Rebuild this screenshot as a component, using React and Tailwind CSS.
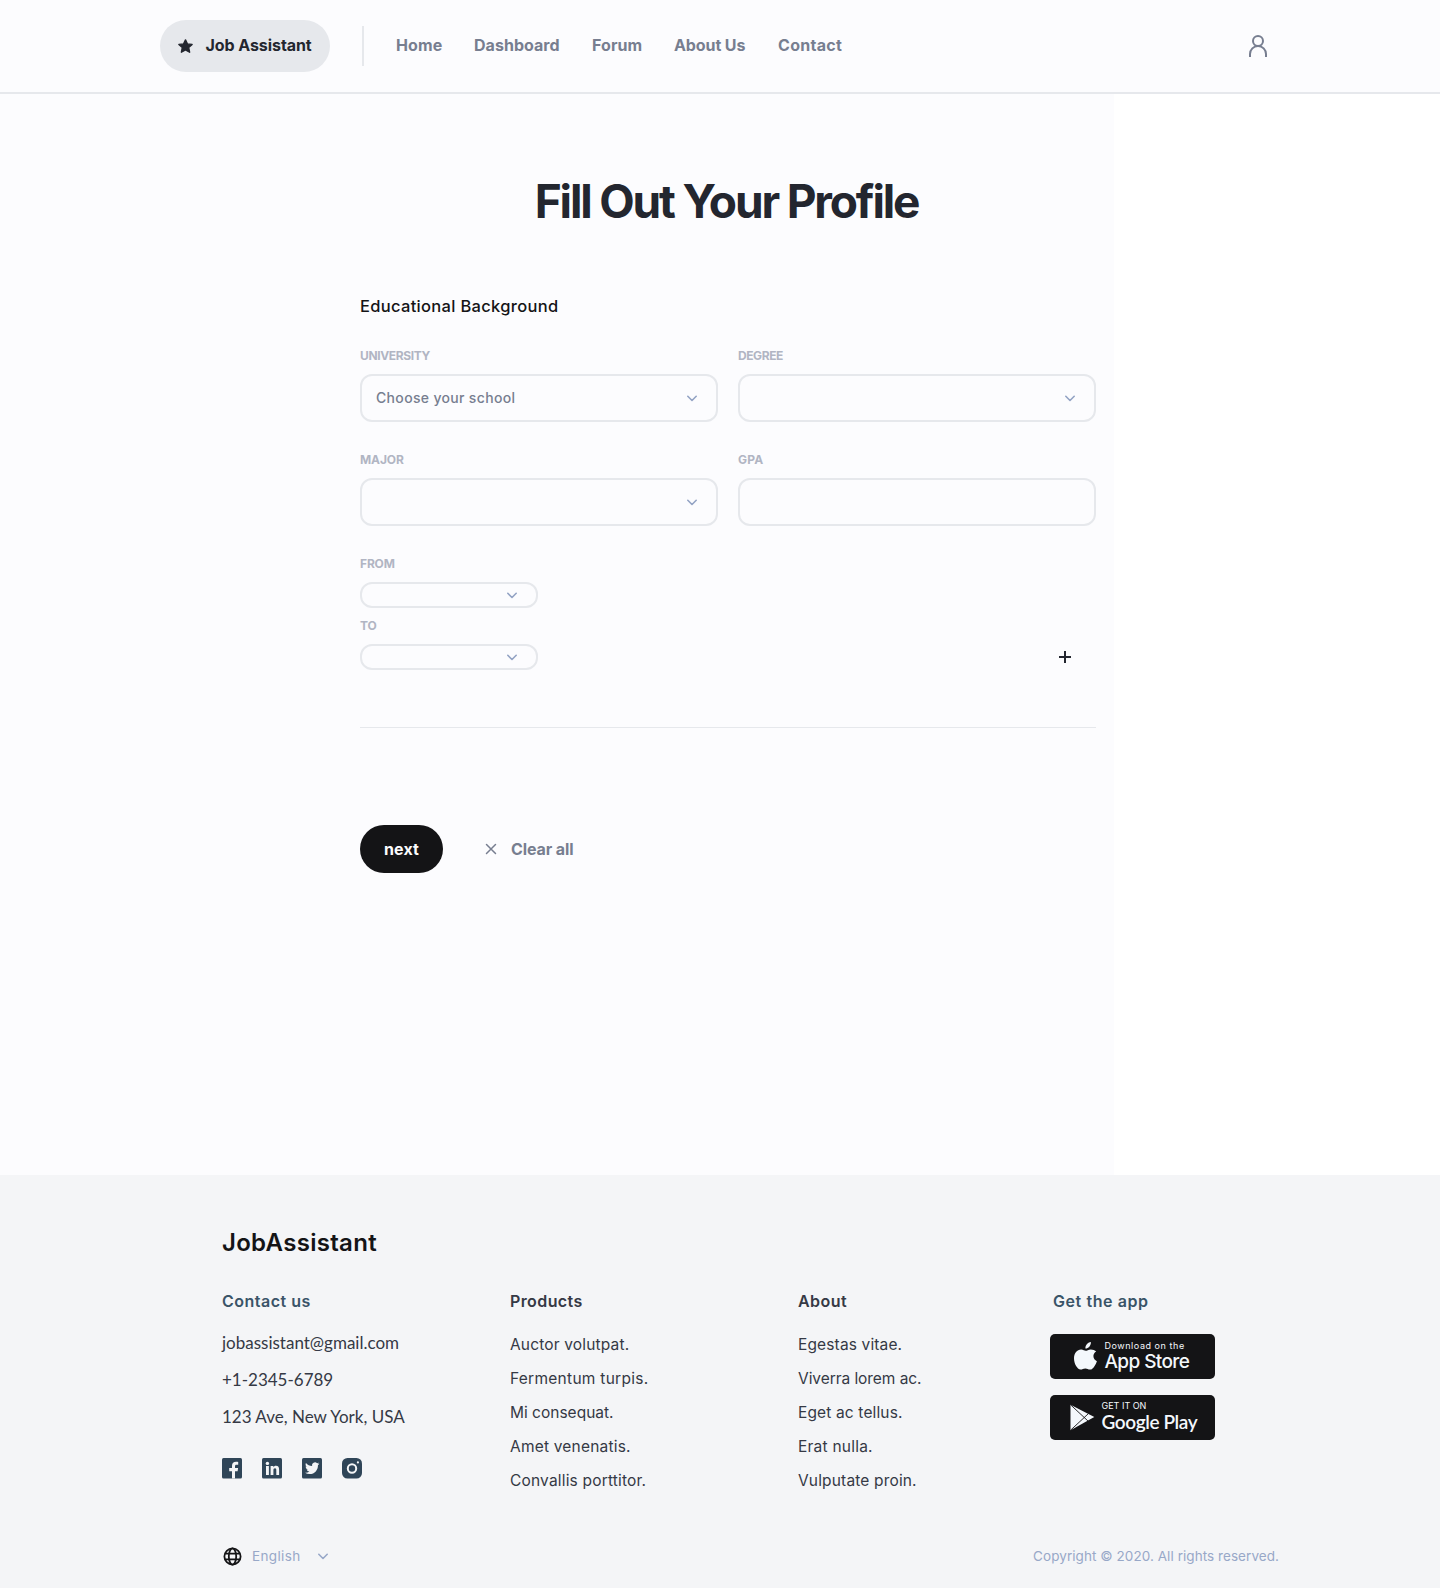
const navLinks = [
  { label: "Home", cls: "w-[78px] tracking-[0.1px]" },
  { label: "Dashboard", cls: "w-[118px] tracking-[0.03px]" },
  { label: "Forum", cls: "w-[82px] tracking-[0.1px]" },
  { label: "About Us", cls: "w-[104px] tracking-[-0.1px]" },
  { label: "Contact", cls: "w-[64px] tracking-[0.3px]" },
];

const products = [
  { label: "Auctor volutpat.", cls: "tracking-[0.16px]" },
  { label: "Fermentum turpis.", cls: "tracking-[0.27px]" },
  { label: "Mi consequat.", cls: "tracking-[0px]" },
  { label: "Amet venenatis.", cls: "tracking-[0.2px]" },
  { label: "Convallis porttitor.", cls: "tracking-[0.18px]" },
];

const about = [
  { label: "Egestas vitae.", cls: "tracking-[0.14px]" },
  { label: "Viverra lorem ac.", cls: "tracking-[-0.06px]" },
  { label: "Eget ac tellus.", cls: "tracking-[0.14px]" },
  { label: "Erat nulla.", cls: "tracking-[0.23px]" },
  { label: "Vulputate proin.", cls: "tracking-[0.16px]" },
];

function Chevron({ className }) {
  return (
    <svg className={className} width="12" height="8" viewBox="0 0 12 8" fill="none" stroke="currentColor" strokeWidth="1.6" strokeLinecap="round" strokeLinejoin="round">
      <path d="M1.8 2.3 6 6.5l4.2-4.2" />
    </svg>
  );
}

function Field({ label, labelCls, boxCls, children, arrow = true }) {
  return (
    <div>
      <div className={`h-3 text-[12px] leading-3 font-bold whitespace-nowrap text-[#b1b5c3] ${labelCls}`}>{label}</div>
      <div className={`mt-3 flex items-center justify-between rounded-xl border-2 border-[#e6e8ec] pl-[14px] ${boxCls}`}>
        <span className="pb-px text-[14px] font-medium tracking-[0.33px] text-[#777e90]">{children}</span>
        {arrow && <Chevron className="text-[#93a3c4]" />}
      </div>
    </div>
  );
}

function LinkColumn({ title, titleCls, links, className }) {
  return (
    <div className={className}>
      <h3 className={`text-[16px] leading-6 font-semibold text-[#353945] ${titleCls}`}>{title}</h3>
      <ul className="mt-[15px] text-[15.5px] leading-[34px] text-[#353945]">
        {links.map((l) => (
          <li key={l.label} className={l.cls}>{l.label}</li>
        ))}
      </ul>
    </div>
  );
}

function Header() {
  return (
    <header className="flex h-[94px] items-start border-b-2 border-[#e6e8ec] bg-[#fcfcfe] pl-[160px]">
      <div className="mt-5 flex h-[52px] w-[170px] items-center rounded-[26px] bg-[#e6e8ec] pl-[18px]">
        <svg width="15" height="14" viewBox="0 0 15 14" fill="#23262f" stroke="#23262f" strokeWidth="1.4" strokeLinejoin="round">
          <path d="M7.5.9 9.4 4.9l4.7.5-3.4 3.2.9 4.6-4.1-2.300-4.100 2.300.9-4.600L.9 5.400l4.700-.5z" />
        </svg>
        <span className="mb-[2px] ml-[12.5px] text-[16px] leading-6 font-bold tracking-[-0.07px] whitespace-nowrap text-[#23262f]">Job Assistant</span>
      </div>
      <div className="mt-[26px] ml-8 h-10 w-[2px] bg-[#e6e8ec]" />
      <nav className="mt-[33px] ml-8 flex text-[16px] leading-6 font-bold whitespace-nowrap text-[#777e90]">
        {navLinks.map((l) => (
          <a key={l.label} className={l.cls}>{l.label}</a>
        ))}
      </nav>
      <svg className="mt-[34px] ml-[406px] text-[#777e90]" width="20" height="24" viewBox="0 0 20 24" fill="none" stroke="currentColor" strokeWidth="2">
        <circle cx="10" cy="7" r="5" />
        <path d="M2 23v-3a8 8 0 0 1 16 0v3" />
      </svg>
    </header>
  );
}

function ProfileForm() {
  return (
    <main className="h-[1081px] w-[1114px] bg-[#fcfcfe] pt-[79px] pl-[360px]">
      <div className="w-[736px]">
        <h1 className="pr-[3px] text-center text-[46px] leading-[56px] font-bold tracking-[-2.16px] text-[#23262f]">Fill Out Your Profile</h1>
        <h2 className="mt-[65px] text-[16.5px] leading-6 font-medium tracking-[0.31px] text-[#141416]">Educational Background</h2>
        <div className="mt-8 grid grid-cols-[358px_358px] gap-x-5 gap-y-8">
          <Field label="UNIVERSITY" labelCls="tracking-[-0.35px]" boxCls="h-12 pr-[18px]">Choose your school</Field>
          <Field label="DEGREE" labelCls="tracking-[-0.42px]" boxCls="h-12 pr-[18px]" />
          <Field label="MAJOR" labelCls="tracking-[-0.1px]" boxCls="h-12 pr-[18px]" />
          <Field label="GPA" labelCls="tracking-[0.2px]" boxCls="h-12" arrow={false} />
        </div>
        <div className="mt-8 flex items-end justify-between">
          <div className="flex w-[178px] flex-col gap-3">
            <Field label="FROM" labelCls="tracking-[-0.15px]" boxCls="h-[26px] pr-[18px]" />
            <Field label="TO" labelCls="tracking-[-0.13px]" boxCls="h-[26px] pr-[18px]" />
          </div>
          <svg className="mr-[25px] mb-[7px]" width="12" height="12" viewBox="0 0 12 12" fill="none" stroke="#23262f" strokeWidth="2">
            <path d="M6 0v12M0 6h12" />
          </svg>
        </div>
        <div className="mt-[57px] h-px bg-[#e6e8ec]" />
        <div className="mt-[97px] flex items-center font-bold">
          <button className="flex h-12 w-[83px] items-center justify-center rounded-3xl bg-[#141416] pb-px text-[16px] leading-6 tracking-[0.1px] text-[#fcfcfd]">next</button>
          <svg className="ml-[42px] text-[#777e90]" width="12" height="12" viewBox="0 0 12 12" fill="none" stroke="currentColor" strokeWidth="1.5" strokeLinecap="round">
            <path d="m1.5 1.5 9 9m0-9-9 9" />
          </svg>
          <span className="mb-px ml-[14px] text-[16px] leading-6 tracking-[-0.1px] text-[#777e90]">Clear all</span>
        </div>
      </div>
    </main>
  );
}

function Socials() {
  return (
    <div className="mt-[23px] flex gap-5 text-[#2f4558]">
      <svg width="20" height="21" viewBox="0 0 20 21">
        <rect width="20" height="20.5" rx="1.5" fill="currentColor" />
        <path d="M10 20.5v-7.3H7.2V10H10V8c0-2.8 1.6-4.2 4.1-4.2.9 0 1.6.1 2.1.2v2.8h-1.7c-1.2 0-1.5.6-1.5 1.5V10h3.1l-.5 3.2H13v7.3z" fill="#f4f5f7" />
      </svg>
      <svg width="20" height="21" viewBox="0 0 20 21">
        <rect width="20" height="20.5" rx="1.5" fill="currentColor" />
        <g fill="#f4f5f7">
          <circle cx="5.4" cy="5.4" r="1.7" />
          <path d="M4 8.1h2.9v9H4zM8.6 8.1h2.7v1.2c.6-1 1.6-1.5 2.6-1.5 2.5 0 3.2 1.6 3.2 4v5.300h-2.800v-4.700c0-1.300-.2-2.200-1.300-2.200-1.200 0-1.600.9-1.600 2.200v4.700H8.600z" />
        </g>
      </svg>
      <svg width="20" height="21" viewBox="0 0 20 21">
        <rect width="20" height="20.5" rx="1.5" fill="currentColor" />
        <path transform="translate(3 3) scale(.6)" d="M23.953 4.57a10 10 0 0 1-2.825.775 4.958 4.958 0 0 0 2.163-2.723c-.951.555-2.005.959-3.127 1.184a4.92 4.92 0 0 0-8.384 4.482C7.69 8.095 4.067 6.13 1.64 3.162a4.822 4.822 0 0 0-.666 2.475c0 1.71.87 3.213 2.188 4.096a4.904 4.904 0 0 1-2.228-.616v.06a4.923 4.923 0 0 0 3.946 4.827 4.996 4.996 0 0 1-2.212.085 4.936 4.936 0 0 0 4.604 3.417 9.867 9.867 0 0 1-6.102 2.105c-.39 0-.779-.023-1.17-.067a13.995 13.995 0 0 0 7.557 2.209c9.053 0 13.998-7.496 13.998-13.985 0-.21 0-.42-.015-.63A9.935 9.935 0 0 0 24 4.59z" fill="#f4f5f7" />
      </svg>
      <svg width="20" height="21" viewBox="0 0 20 21">
        <rect width="20" height="20.5" rx="5.5" fill="currentColor" />
        <circle cx="10" cy="10.5" r="4.2" fill="none" stroke="#f4f5f7" strokeWidth="2" />
        <circle cx="15.9" cy="4.4" r="1.1" fill="#f4f5f7" />
      </svg>
    </div>
  );
}

function Footer() {
  return (
    <footer className="h-[413px] bg-[#f4f5f7] pt-[52px] pl-[222px]">
      <div className="text-[24px] leading-8 font-semibold tracking-[0.3px] text-[#141416]">JobAssistant</div>
      <div className="mt-[30px] flex">
        <div className="w-[288px]">
          <h3 className="text-[16px] leading-6 font-semibold tracking-[0.5px] text-[#3a5468]">Contact us</h3>
          <ul className="mt-[11px] font-[Lato,sans-serif] text-[17px] leading-[37px] text-[#353945]">
            <li>jobassistant@gmail.com</li>
            <li>+1-2345-6789</li>
            <li>123 Ave, New York, USA</li>
          </ul>
          <Socials />
        </div>
        <LinkColumn title="Products" titleCls="tracking-[0.4px]" links={products} className="w-[288px]" />
        <LinkColumn title="About" titleCls="tracking-[0.46px]" links={about} className="w-[252px]" />
        <div>
          <h3 className="pl-[3px] text-[16px] leading-6 font-semibold tracking-[0.57px] text-[#3a5468]">Get the app</h3>
          <div className="mt-[21px] flex h-[45px] w-[165px] items-start rounded-[5px] bg-[#141416] pl-6 text-[#f4f8fc]">
            <svg className="mt-2" width="23" height="28" viewBox="0 0 23 28" fill="currentColor">
              <path d="M16.9 0c.2 1.9-.6 3.5-1.6 4.7-1.100 1.200-2.500 1.900-3.900 1.800-.2-1.700.6-3.400 1.600-4.500C14.100.8 15.700.1 16.900 0zM22.200 9.500c-1.700 1-2.800 2.500-2.800 4.600 0 2.500 1.500 4.300 3.500 5.100-.5 1.600-1.300 3.200-2.300 4.700-1.300 1.900-2.600 3.700-4.600 3.700s-2.500-1.200-4.700-1.200c-2.100 0-2.900 1.200-4.700 1.200-1.900 0-3.300-1.900-4.500-3.700C.7 21.800 0 18.900 0 16.300c0-5 3.100-8.800 7.100-8.800 2 0 3.500 1.300 4.600 1.300 1.200 0 2.900-1.400 5.100-1.400 2.100 0 4.200.8 5.400 2.100z" />
            </svg>
            <div className="ml-[7.5px] whitespace-nowrap">
              <div className="mt-[6px] text-[9px] leading-3 tracking-[0.55px]">Download on the</div>
              <div className="text-[19px] leading-5 font-medium tracking-[-0.6px]">App Store</div>
            </div>
          </div>
          <div className="mt-4 flex h-[45px] w-[165px] items-start rounded-[5px] bg-[#141416] pl-5 text-[#f4f8fc]">
            <svg className="mt-[9px]" width="25" height="27" viewBox="0 0 25 27">
              <path d="M.5.7v25.6L24.3 13z" fill="currentColor" />
              <path d="M.7.9 18 17M.7 26.1 18 10" fill="none" stroke="#141416" strokeWidth=".9" />
            </svg>
            <div className="ml-[6.5px] whitespace-nowrap">
              <div className="mt-[4px] text-[9px] leading-[14px]">GET IT ON</div>
              <div className="mt-[-3px] font-[Lato,sans-serif] text-[19px] leading-6 font-semibold tracking-[-0.4px]">Google Play</div>
            </div>
          </div>
        </div>
      </div>
      <div className="mt-[46px] flex h-6 items-center pr-[161px] text-[13.5px] text-[#98a8c8]">
        <svg className="ml-px" width="19" height="19" viewBox="0 0 19 19" fill="none" stroke="#141416" strokeWidth="1.8">
          <circle cx="9.5" cy="9.5" r="8.1" />
          <ellipse cx="9.5" cy="9.5" rx="3.7" ry="8.1" />
          <path d="M2 6.700h15M2 12.300h15" />
        </svg>
        <span className="ml-[10px] tracking-[0.37px]">English</span>
        <Chevron className="ml-4" />
        <span className="ml-auto tracking-[0.06px]">Copyright © 2020. All rights reserved.</span>
      </div>
    </footer>
  );
}

export default function App() {
  return (
    <div className="w-[1440px] bg-white font-[Inter,sans-serif]">
      <Header />
      <ProfileForm />
      <Footer />
    </div>
  );
}
